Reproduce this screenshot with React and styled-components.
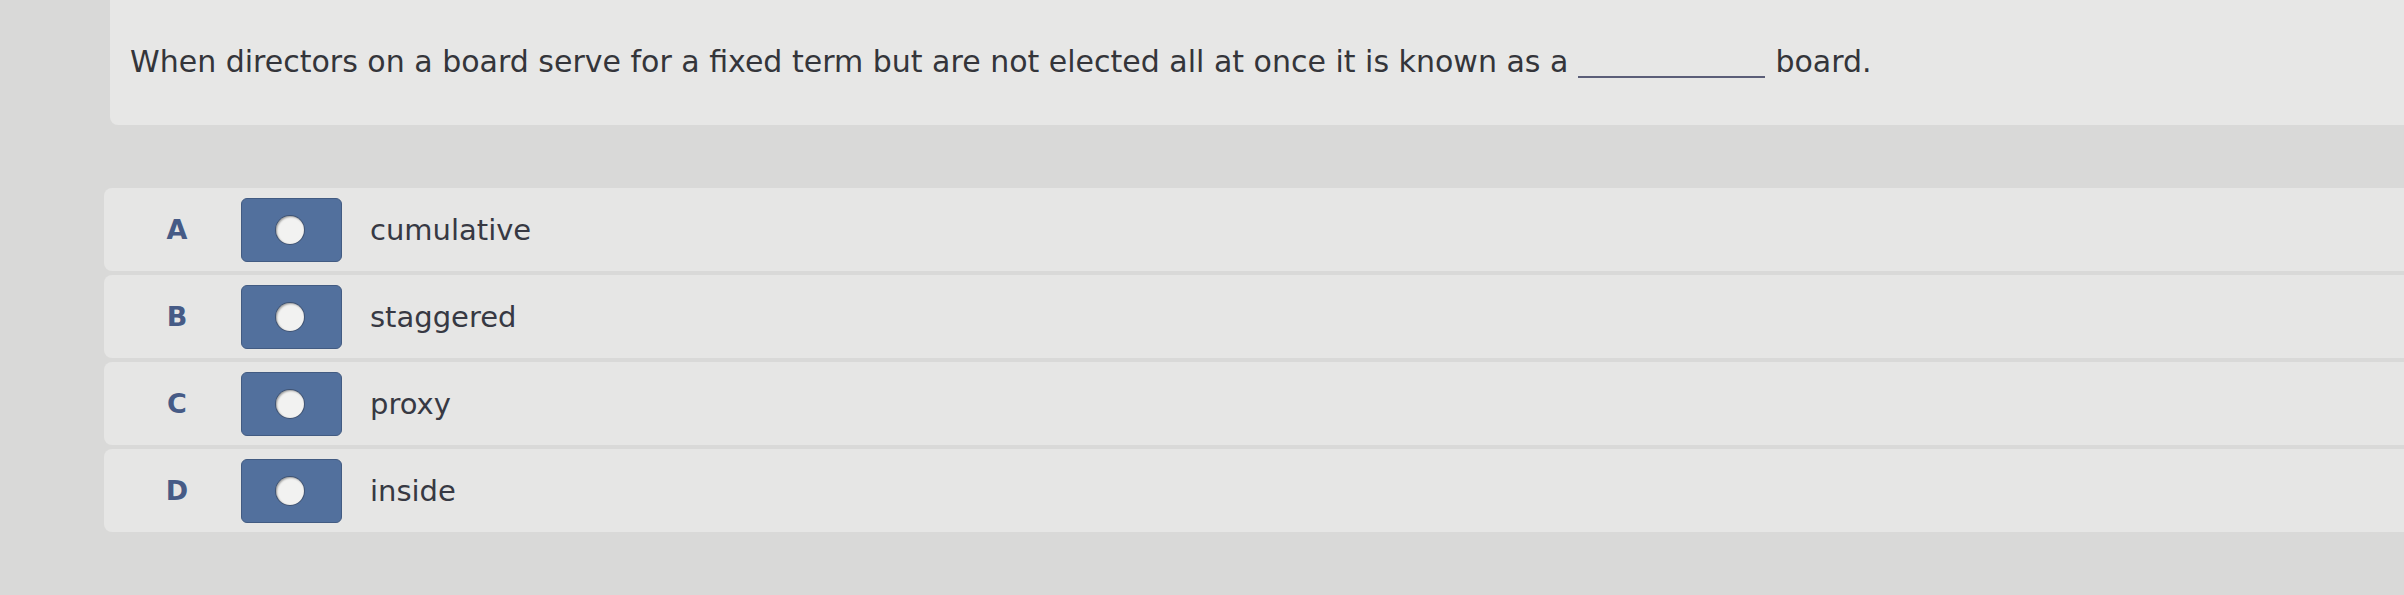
import React from 'react';
import styled, { createGlobalStyle } from 'styled-components';

const GlobalStyle = createGlobalStyle`
  html, body {
    margin: 0;
    padding: 0;
    background: #d9d9d8;
  }
  body {
    font-family: "DejaVu Sans", Verdana, sans-serif;
  }
`;

const Page = styled.div`
  min-height: 595px;
  display: flex;
  flex-direction: column;
  background: #d9d9d8;
`;

const QuestionCard = styled.div`
  margin-left: 110px;
  height: 125px;
  box-sizing: border-box;
  padding: 44px 0 0 20px;
  background: #e7e7e6;
  border-bottom-left-radius: 8px;
  font-size: 30px;
  line-height: 36px;
  color: #34353a;
`;

const Blank = styled.span`
  display: inline-block;
  width: 187px;
  height: 0;
  margin: 0 1px 0 0;
  border-bottom: 2px solid #5b5e78;
  vertical-align: -6px;
`;

const Options = styled.div`
  margin: 63px 0 0 104px;
  display: flex;
  flex-direction: column;
  gap: 4px;
`;

const Row = styled.div`
  height: 83px;
  display: flex;
  align-items: center;
  padding-left: 14px;
  background: #e6e6e5;
  border-top-left-radius: 8px;
  border-bottom-left-radius: 8px;
`;

const Letter = styled.span`
  width: 118px;
  text-align: center;
  font-weight: bold;
  font-size: 27px;
  color: #465b86;
`;

const Radio = styled.button`
  margin-left: 5px;
  width: 101px;
  height: 64px;
  padding: 0;
  display: flex;
  align-items: center;
  justify-content: center;
  background: #52709d;
  border: 1px solid #425b82;
  border-radius: 6px;
  cursor: pointer;
`;

const Dot = styled.span`
  width: 28px;
  height: 28px;
  margin-left: -3px;
  border-radius: 50%;
  background: #f2f2f1;
  box-shadow: inset 1px 1px 2px rgba(0, 0, 0, 0.35), 0 0 0 1px rgba(50, 60, 80, 0.55);
`;

const Label = styled.span`
  margin-left: 28px;
  font-size: 29px;
  color: #373943;
`;

const choices = [
  { key: 'A', text: 'cumulative' },
  { key: 'B', text: 'staggered' },
  { key: 'C', text: 'proxy' },
  { key: 'D', text: 'inside' },
];

export default function App() {
  return (
    <Page>
      <GlobalStyle />
      <QuestionCard>
        When directors on a board serve for a fixed term but are not elected all at once it is known as a{' '}
        <Blank /> board.
      </QuestionCard>
      <Options>
        {choices.map((c) => (
          <Row key={c.key}>
            <Letter>{c.key}</Letter>
            <Radio type="button" aria-label={c.text}>
              <Dot />
            </Radio>
            <Label>{c.text}</Label>
          </Row>
        ))}
      </Options>
    </Page>
  );
}
